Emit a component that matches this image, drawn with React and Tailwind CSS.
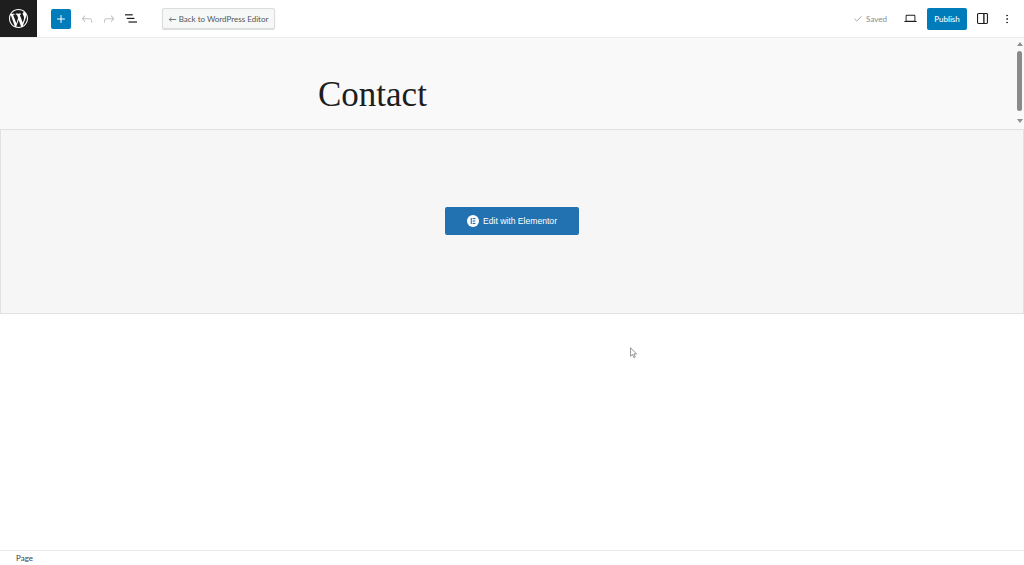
import { Plus, Check, MoreVertical } from 'lucide-react';

function WpLogo() {
	return (
		<svg viewBox="0 0 20 20" className="w-[19px] h-[19px]" fill="#fff">
			<path d="M20 10c0-5.51-4.49-10-10-10C4.480 0 0 4.490 0 10c0 5.520 4.480 10 10 10 5.510 0 10-4.480 10-10zM7.780 15.370L4.370 6.220c.55-.02 1.170-.08 1.170-.08.5-.06.44-1.130-.06-1.110 0 0-1.450.11-2.370.11-.18 0-.37 0-.58-.01C4.120 2.690 6.870 1.110 10 1.110c2.330 0 4.450.87 6.050 2.340-.68-.11-1.650.39-1.650 1.580 0 .74.45 1.360.9 2.100.35.61.55 1.360.55 2.460 0 1.490-1.400 5-1.400 5l-3.030-8.370c.54-.02.82-.17.82-.17.5-.05.44-1.250-.06-1.220 0 0-1.440.12-2.380.12-.87 0-2.330-.12-2.330-.12-.5-.03-.56 1.200-.06 1.220l.92.080 1.260 3.410zM17.410 10c.24-.64.74-1.870.43-4.250.7 1.290 1.050 2.710 1.050 4.250 0 3.290-1.730 6.240-4.400 7.780.97-2.590 1.940-5.200 2.920-7.780zM6.100 18.090C3.120 16.650 1.110 13.530 1.110 10c0-1.300.23-2.480.72-3.590C3.250 10.300 4.670 14.200 6.100 18.090zm4.030-6.630l2.580 6.980c-.86.29-1.740.450-2.710.450-.81 0-1.610-.11-2.370-.34.84-2.400 1.670-4.750 2.500-7.090z" />
		</svg>
	);
}

function UndoIcon() {
	return (
		<svg viewBox="0 0 24 24" className="ml-[8px] h-[16px] w-[16px]" fill="#c4c4c4">
			<path d="M18.300 11.700c-.6-.6-1.400-.9-2.300-.9H6.700l2.900-3.300-1.100-1-4.500 5 4.500 5 1.100-1-2.900-3.300H16c.5 0 .9.2 1.300.5 1 1 1 3.400 1 4.500v.3h1.500v-.2c0-1.500 0-4.300-1.500-5.800z" />
		</svg>
	);
}

function RedoIcon() {
	return (
		<svg viewBox="0 0 24 24" className="ml-[6px] h-[16px] w-[16px]" fill="#c4c4c4">
			<path d="M15.600 6.500l-1.100 1 2.900 3.300H8c-.9 0-1.700.3-2.300.9-1.400 1.500-1.400 4.200-1.400 5.800v.2h1.500v-.3c0-1.100 0-3.500 1-4.500.3-.3.7-.5 1.300-.5h9.200L14.500 15.500l1.100 1 4.500-5-4.500-5z" />
		</svg>
	);
}

function ListViewIcon() {
	return (
		<svg viewBox="0 0 14 10" className="ml-[8px] h-[9px] w-[12px]" fill="#1e1e1e">
			<rect x="0" y="0" width="9" height="1.400" />
			<rect x="2" y="4.200" width="9" height="1.400" />
			<rect x="4" y="8.400" width="10" height="1.400" />
		</svg>
	);
}

function LaptopIcon() {
	return (
		<svg viewBox="0 0 24 24" className="ml-[16px] h-[15px] w-[15px]" fill="#1e1e1e">
			<path d="M20.500 16h-.7V8c0-1.100-.9-2-2-2H6.200c-1.100 0-2 .9-2 2v8h-.7c-.8 0-1.500.7-1.500 1.500h20c0-.8-.7-1.500-1.500-1.500zM5.700 8c0-.3.2-.5.5-.5h11.600c.3 0 .5.2.5.5v7.600H5.700V8z" />
		</svg>
	);
}

function SidebarIcon() {
	return (
		<svg viewBox="0 0 12 12" className="ml-[10px] h-[11px] w-[11px]" fill="none" stroke="#1e1e1e" strokeWidth="1.200">
			<rect x="0.600" y="0.600" width="10.800" height="10.800" rx="1" />
			<path d="M7.500 1v10" strokeWidth="1.500" />
		</svg>
	);
}

function ElementorIcon() {
	return (
		<span className="flex h-[12px] w-[12px] items-center justify-center rounded-full bg-white">
			<svg viewBox="0 0 12 12" className="h-[12px] w-[12px]" fill="#2271b1">
				<rect x="3.700" y="3" width="1.100" height="6" />
				<rect x="5.600" y="3" width="2.800" height="1.100" />
				<rect x="5.600" y="5.450" width="2.800" height="1.100" />
				<rect x="5.600" y="7.900" width="2.800" height="1.100" />
			</svg>
		</span>
	);
}

export default function App() {
	return (
		<div className="relative flex h-[565px] w-[1024px] flex-col overflow-hidden bg-white font-['Lato',sans-serif]">
			<header className="flex h-[38px] shrink-0 items-center border-b border-[#ececec] bg-white">
				<div className="flex h-[37px] w-[37px] shrink-0 items-center justify-center bg-[#1e1e1e]">
					<WpLogo />
				</div>
				<button className="ml-[14px] flex h-[20px] w-[20px] items-center justify-center rounded-[2px] bg-[#007cba]">
					<Plus size={12} color="#fff" strokeWidth={2} />
				</button>
				<UndoIcon />
				<RedoIcon />
				<ListViewIcon />
				<button className="ml-[25px] flex h-[21px] w-[113px] items-center justify-center whitespace-nowrap rounded-[2px] border border-[#dcdcde] bg-[#f6f7f7] text-[8px] text-[#50575e] shadow-[0_1px_1px_#dcdcde]">
					← Back to WordPress Editor
				</button>
				<div className="ml-auto flex items-center">
					<Check size={10} color="#757575" strokeWidth={1.500} />
					<span className="ml-[3px] text-[8px] text-[#8a8a8a]">Saved</span>
					<LaptopIcon />
					<button className="ml-[9px] flex h-[22px] w-[40px] items-center justify-center rounded-[2px] bg-[#007cba] text-[8px] font-medium text-white">
						Publish
					</button>
					<SidebarIcon />
					<MoreVertical size={12} color="#1e1e1e" strokeWidth={1.600} className="ml-[13px] mr-[11px]" />
				</div>
			</header>

			<div className="flex h-[91px] shrink-0 bg-[#f9f9f9]">
				<div className="flex-1 pl-[318px] pt-[37px]">
					<h1 className="font-['Liberation_Serif',serif] text-[35px] leading-[40px] text-[#1e1e1e]">Contact</h1>
				</div>
				<div className="flex w-[8px] flex-col items-center pr-[1px]">
					<span className="mt-[4px] h-0 w-0 border-x-[3.500px] border-b-[4px] border-x-transparent border-b-[#8f8f8f]" />
					<span className="mt-[5px] h-[60px] w-[5px] rounded-full bg-[#8a8a8a]" />
					<span className="mt-[8px] h-0 w-0 border-x-[3.500px] border-t-[4px] border-x-transparent border-t-[#8f8f8f]" />
				</div>
			</div>

			<div className="flex h-[185px] shrink-0 items-center justify-center border border-[#e2e2e2] bg-[#f6f6f6]">
				<button className="mt-[-1px] flex h-[28px] w-[134px] items-center justify-center gap-[4px] rounded-[2px] bg-[#2271b1] font-['Liberation_Sans',sans-serif] text-[8.600px] text-white">
					<ElementorIcon />
					Edit with Elementor
				</button>
			</div>

			<div className="flex-1 bg-white" />

			<footer className="flex h-[15px] shrink-0 items-center border-t border-[#e8e8e8] bg-white pl-[16px] text-[8px] text-[#3c434a]">
				Page
			</footer>

			{/* mouse pointer in the capture */}
			<svg viewBox="0 0 9 13" className="absolute left-[630px] top-[347px] h-[12px] w-[8px]" fill="#fff" stroke="#6b6b6b" strokeWidth="0.800">
				<path d="M0.600 0.600v9.500l2.200-2 1.500 3.500 1.600-.7-1.500-3.300h3z" />
			</svg>
		</div>
	);
}
